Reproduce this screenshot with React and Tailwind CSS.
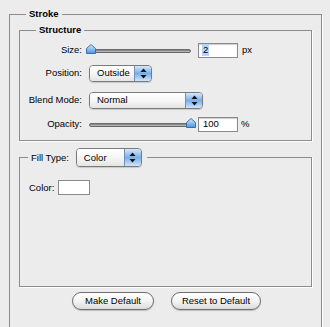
import React from "react";

function Arrows() {
  return (
    <svg width="7" height="11" viewBox="0 0 7 11">
      <path d="M3.5 0.5 L6.5 4 H0.5 Z" fill="#111" />
      <path d="M3.5 10.5 L6.5 7 H0.5 Z" fill="#111" />
    </svg>
  );
}

function Popup({ value, width, height = "h-[17px]" }) {
  return (
    <div
      className={`flex ${height} ${width} rounded-[4px] border border-[#7a7a7a] overflow-hidden shadow-[0_1px_1px_rgba(0,0,0,0.15)]`}
    >
      <div className="flex-1 flex items-center pl-[7px] bg-gradient-to-b from-white via-[#f6f6f6] to-[#e4e4e4]">
        {value}
      </div>
      <div className="w-[17px] flex items-center justify-center border-l border-[#6f8fb8] bg-gradient-to-b from-[#d6e8fb] via-[#78aee6] to-[#cfe6fb]">
        <Arrows />
      </div>
    </div>
  );
}

function Thumb({ side }) {
  return (
    <svg className={`absolute top-0 ${side}`} width="10" height="10" viewBox="0 0 10 10">
      <defs>
        <linearGradient id="th" x1="0" y1="0" x2="0" y2="1">
          <stop offset="0" stopColor="#e4f1fd" />
          <stop offset="0.5" stopColor="#8cc0ef" />
          <stop offset="1" stopColor="#4d93dc" />
        </linearGradient>
      </defs>
      <path d="M5 0.5 L9.5 4.5 V9.5 H0.5 V4.5 Z" fill="url(#th)" stroke="#3b6ea6" strokeWidth="1" />
    </svg>
  );
}

function Slider({ width, side, className = "" }) {
  return (
    <div className={`relative ${width} h-[10px] flex items-end -translate-y-[1px] ${className}`}>
      <div className="h-[4px] w-full mb-[1px] rounded-full border border-[#6a6a6a] bg-gradient-to-b from-[#7a7a7a] to-[#c4c4c4]" />
      <Thumb side={side} />
    </div>
  );
}

function Field({ children, className = "" }) {
  return (
    <div
      className={`w-[40px] h-[15px] flex items-center bg-white border border-[#8a8a8a] shadow-[inset_0_1px_1px_rgba(0,0,0,0.2)] ${className}`}
    >
      {children}
    </div>
  );
}

function Row({ label, className, children }) {
  return (
    <div className={`flex items-center h-[18px] ${className}`}>
      <span className="w-[54px] text-right">{label}</span>
      <div className="ml-[7px] flex items-center">{children}</div>
    </div>
  );
}

export default function App() {
  return (
    <div className="w-[330px] h-[327px] overflow-hidden bg-[#ececec] text-[9.5px] leading-[12px] text-black font-['Liberation_Sans',Arial,sans-serif]">
      <fieldset className="ml-[9px] mt-[8px] w-[313px] border border-[#8c8c8c] shadow-[1px_1px_0_#fff] px-[9px] pb-[30px]">
        <legend className="ml-[7px] px-[3px] font-bold leading-[12px]">Stroke</legend>

        <fieldset className="mt-[4px] border border-[#8c8c8c] shadow-[1px_1px_0_#fff] pl-[8px] pt-[5px] pb-[7px]">
          <legend className="ml-[8px] px-[3px] font-bold leading-[12px]">Structure</legend>

          <Row label="Size:">
            <Slider width="w-[105px]" side="left-0" className="-ml-[3px]" />
            <Field className="ml-[7px] pl-[3px]">
              <span className="bg-[#b4d4fb] px-[1px]">2</span>
            </Field>
            <span className="ml-[4px]">px</span>
          </Row>

          <Row label="Position:" className="mt-[5px]">
            <Popup value="Outside" width="w-[63px]" />
          </Row>

          <Row label="Blend Mode:" className="mt-[9px]">
            <Popup value="Normal" width="w-[114px]" />
          </Row>

          <Row label="Opacity:" className="mt-[6px]">
            <Slider width="w-[107px]" side="right-0" />
            <Field className="ml-[2px] pl-[4px]">100</Field>
            <span className="ml-[3px]">%</span>
          </Row>
        </fieldset>

        <fieldset className="mt-[7px] border border-[#8c8c8c] shadow-[1px_1px_0_#fff] pl-[8px]">
          <legend className="pl-[3px] pr-[5px]">
            <div className="flex items-center">
              <span>Fill Type:</span>
              <div className="ml-[7px]">
                <Popup value="Color" width="w-[66px]" height="h-[19px]" />
              </div>
            </div>
          </legend>
          <div className="h-[119px] pt-[13px]">
            <div className="flex items-center pl-[1px]">
              <span>Color:</span>
              <div className="ml-[4px] w-[32px] h-[15px] bg-white border border-[#8a8a8a]" />
            </div>
          </div>
        </fieldset>

        <div className="mt-[5px] flex justify-center gap-[17px] pl-[2px]">
          <button className="w-[82px] h-[18px] rounded-full border border-[#6e6e6e] bg-gradient-to-b from-white via-[#f4f4f4] to-[#dcdcdc] shadow-[0_1px_1px_rgba(0,0,0,0.2)]">
            Make Default
          </button>
          <button className="w-[90px] h-[18px] rounded-full border border-[#6e6e6e] bg-gradient-to-b from-white via-[#f4f4f4] to-[#dcdcdc] shadow-[0_1px_1px_rgba(0,0,0,0.2)]">
            Reset to Default
          </button>
        </div>
      </fieldset>
    </div>
  );
}
